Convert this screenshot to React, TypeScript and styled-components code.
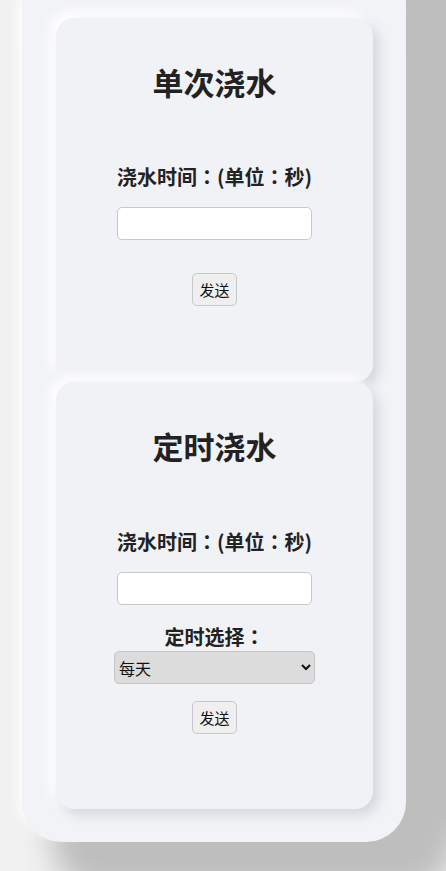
import styled, { createGlobalStyle } from "styled-components";

const GlobalStyle = createGlobalStyle`
  body {
    margin: 0;
    background: #f1f1f1;
    font-family: "Noto Sans CJK SC", "Noto Sans", sans-serif;
    color: #222;
  }
`;

const Page = styled.div`
  padding: 0 0 60px 22px;
  width: 384px;
`;

const Panel = styled.div`
  background: #f2f3f7;
  border-radius: 0 0 40px 40px;
  padding: 18px 33px 33px 34px;
  box-shadow: 40px 40px 30px 10px #bebebe, 90px -20px 30px 10px #bebebe,
    -4px -4px 12px #ffffff;
`;

const Card = styled.section<{ $bottom: number }>`
  background: #f1f2f6;
  border-radius: 18px;
  padding: 44px 0 ${(p) => p.$bottom}px;
  display: flex;
  flex-direction: column;
  align-items: center;
  box-shadow: 6px 6px 12px #d6d7dd, -6px -6px 12px #ffffff;
`;

const Title = styled.h2`
  margin: 0;
  font-size: 31px;
  line-height: 40px;
  font-weight: 700;
`;

const Label = styled.h3<{ $top: number }>`
  margin: ${(p) => p.$top}px 0 0;
  font-family: "Noto Sans CJK TC", "Noto Sans", sans-serif;
  font-size: 20px;
  line-height: 24px;
  font-weight: 700;
`;

const TimeInput = styled.input`
  margin-top: 18px;
  width: 195px;
  height: 33px;
  box-sizing: border-box;
  border: 1px solid #c8c8c8;
  border-radius: 5px;
  background: #fff;
  outline: none;
`;

const Select = styled.select`
  margin-top: 2px;
  width: 201px;
  height: 33px;
  box-sizing: border-box;
  border: 1px solid #c6c6c6;
  border-radius: 5px;
  background: #dcdcdc;
  color: #111;
  font-family: inherit;
  font-size: 16px;
  padding: 0;
`;

const SendButton = styled.button<{ $top: number }>`
  margin-top: ${(p) => p.$top}px;
  height: 33px;
  padding: 0 6px;
  box-sizing: border-box;
  border: 1px solid #c8c8c8;
  border-radius: 5px;
  background: #efefef;
  color: #111;
  font-family: inherit;
  font-size: 15px;
`;

const App = () => {
  return (
    <Page>
      <GlobalStyle />
      <Panel>
        <Card $bottom={76}>
          <Title>单次浇水</Title>
          <Label $top={63}>浇水时间：(单位：秒)</Label>
          <TimeInput type="text" />
          <SendButton $top={33}>发送</SendButton>
        </Card>
        <Card $bottom={75}>
          <Title>定时浇水</Title>
          <Label $top={64}>浇水时间：(单位：秒)</Label>
          <TimeInput type="text" />
          <Label $top={20}>定时选择：</Label>
          <Select defaultValue="day">
            <option value="day">每天</option>
            <option value="week">每周</option>
          </Select>
          <SendButton $top={17}>发送</SendButton>
        </Card>
      </Panel>
    </Page>
  );
};

export default App;
